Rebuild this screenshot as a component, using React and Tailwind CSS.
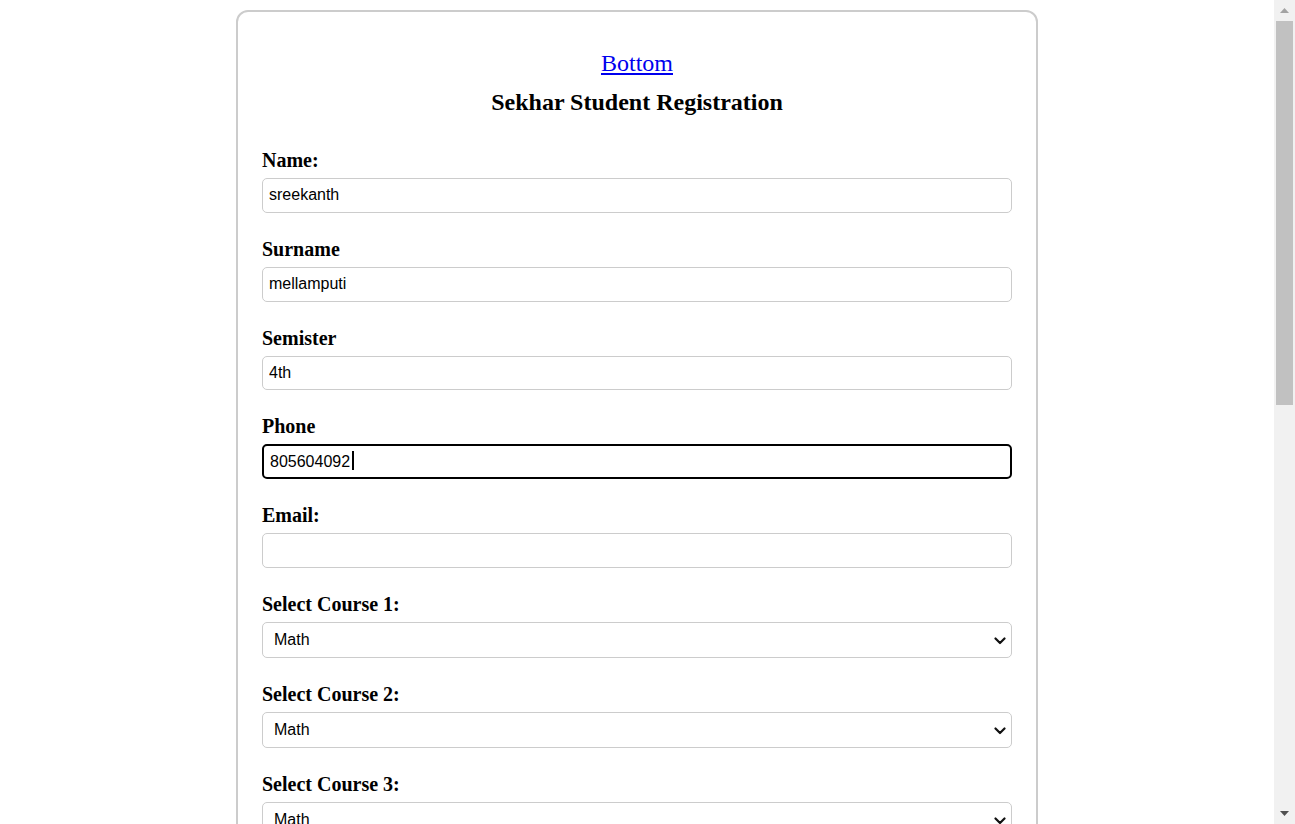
import { useState } from "react";

const serif = "font-['Liberation_Serif','Times_New_Roman',serif]";
const sans = "font-['Liberation_Sans',Arial,sans-serif]";

const courses = ["Math", "Physics", "Chemistry", "Biology", "Computers"];

function Field({ label, children }) {
  return (
    <div className="mb-6">
      <label className={`block text-[20px] leading-6 font-bold text-black mb-1.5 ${serif}`}>{label}</label>
      {children}
    </div>
  );
}

function TextInput({ value, focused }) {
  const [v, setV] = useState(value);
  return (
    <div className="relative">
      <input
        type="text"
        value={v}
        onChange={(e) => setV(e.target.value)}
        className={`block w-full h-[34.75px] rounded-[5px] px-[6px] text-[16px] text-black bg-white outline-none ${sans} ${
          focused ? "border-2 border-black px-[5px]" : "border border-[#ccc]"
        }`}
      />
      {/* caret, as captured in the screenshot */}
      {focused && <span className="absolute left-[90px] top-[7px] w-[2px] h-[19px] bg-black" />}
    </div>
  );
}

function CourseSelect() {
  return (
    <div className="relative">
      <select
        defaultValue="Math"
        className={`block w-full h-9 appearance-none rounded-[5px] border border-[#ccc] bg-white pl-[11px] pr-8 text-[16px] text-black ${sans}`}
      >
        {courses.map((c) => (
          <option key={c}>{c}</option>
        ))}
      </select>
      <svg
        className="pointer-events-none absolute right-[6px] top-[15px]"
        width="12"
        height="8"
        viewBox="0 0 12 8"
        fill="none"
      >
        <path d="M1.5 1.5 L6 6 L10.5 1.5" stroke="#111" strokeWidth="2.2" strokeLinecap="round" strokeLinejoin="round" />
      </svg>
    </div>
  );
}

function Scrollbar() {
  return (
    <div className="fixed right-0 top-0 flex h-screen w-[21px] flex-col items-center bg-[#f1f1f1]">
      <div className="flex h-[21px] w-full items-center justify-center">
        <svg width="9" height="5" viewBox="0 0 9 5">
          <path d="M0 5 L4.5 0 L9 5 Z" fill="#a3a3a3" />
        </svg>
      </div>
      <div className="h-[384px] w-[17px] bg-[#c1c1c1]" />
      <div className="flex-1" />
      <div className="flex h-[21px] w-full items-center justify-center">
        <svg width="9" height="5" viewBox="0 0 9 5">
          <path d="M0 0 L9 0 L4.5 5 Z" fill="#505050" />
        </svg>
      </div>
    </div>
  );
}

export default function App() {
  return (
    <div className="bg-white min-h-screen pr-[21px]">
      <div className="pt-[10px] pb-[40px]">
        <div className="mx-auto w-[802px] rounded-[12px] border-2 border-[#ccc] bg-white px-6 pt-6 pb-8">
          <div className={`mt-[14px] h-[27px] text-center text-[24px] leading-[27px] ${serif}`}>
            <a href="#bottom" className="text-[#0000ee] underline">
              Bottom
            </a>
          </div>
          <h2 className={`mt-3 mb-8 h-[27px] text-center text-[24px] leading-[27px] font-bold text-black ${serif}`}>
            Sekhar Student Registration
          </h2>

          <Field label="Name:">
            <TextInput value="sreekanth" />
          </Field>
          <Field label="Surname">
            <TextInput value="mellamputi" />
          </Field>
          <Field label="Semister">
            <TextInput value="4th" />
          </Field>
          <Field label="Phone">
            <TextInput value="805604092" focused />
          </Field>
          <Field label="Email:">
            <TextInput value="" />
          </Field>
          <Field label="Select Course 1:">
            <CourseSelect />
          </Field>
          <Field label="Select Course 2:">
            <CourseSelect />
          </Field>
          <Field label="Select Course 3:">
            <CourseSelect />
          </Field>
          <Field label="Select Course 4:">
            <CourseSelect />
          </Field>
          <Field label="Select Course 5:">
            <CourseSelect />
          </Field>
          <Field label="Address:">
            <textarea
              rows={4}
              className={`block w-full rounded-[5px] border border-[#ccc] px-[6px] py-1 text-[16px] ${sans}`}
            />
          </Field>
          <Field label="Gender:">
            <div className={`flex gap-6 text-[16px] ${sans}`}>
              <label className="flex items-center gap-1.5">
                <input type="radio" name="g" /> Male
              </label>
              <label className="flex items-center gap-1.5">
                <input type="radio" name="g" /> Female
              </label>
            </div>
          </Field>
          <Field label="Password:">
            <TextInput value="" />
          </Field>
          <Field label="Confirm Password:">
            <TextInput value="" />
          </Field>
          <div className="flex justify-center gap-4 pt-2">
            <button className={`h-10 px-6 rounded-[5px] bg-[#4caf50] text-white text-[16px] ${sans}`}>Submit</button>
            <button className={`h-10 px-6 rounded-[5px] bg-[#f44336] text-white text-[16px] ${sans}`}>Reset</button>
          </div>
          <div id="bottom" className={`mt-8 text-center text-[24px] ${serif}`}>
            <a href="#" className="text-[#0000ee] underline">
              Top
            </a>
          </div>
        </div>
      </div>
      <Scrollbar />
    </div>
  );
}
